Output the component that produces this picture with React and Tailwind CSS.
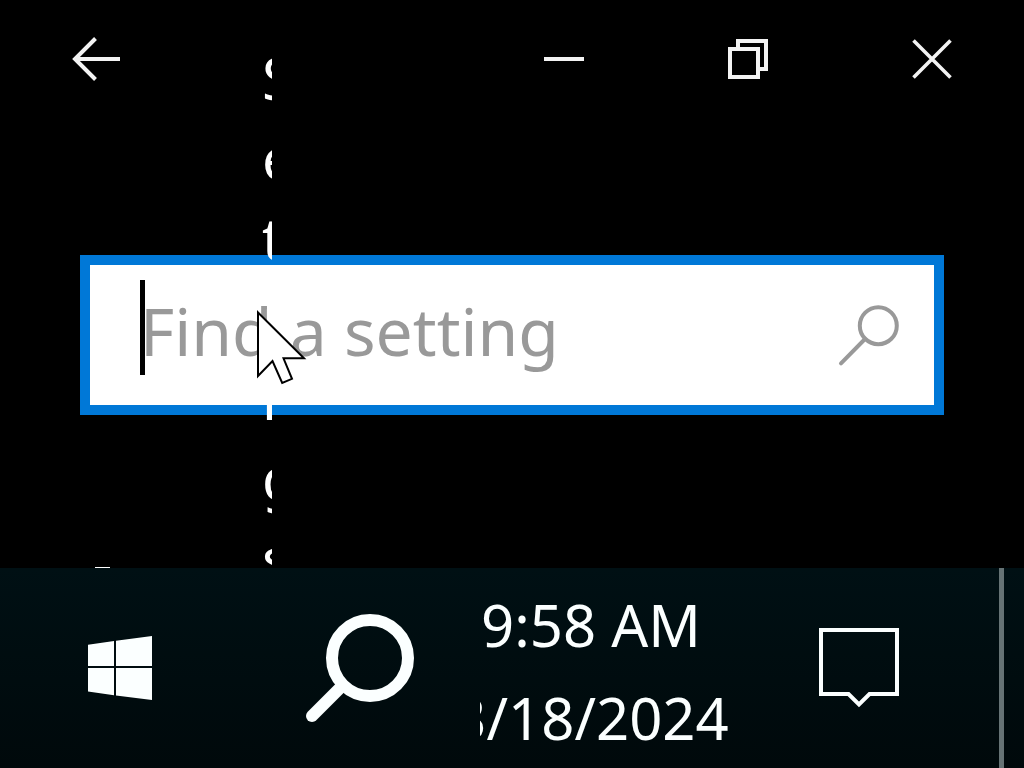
import React, { useState } from "react";

const TITLE_LINES = ["S", "e", "tt", "i", "n", "g", "s"];

function BackIcon() {
  return (
    <svg width="48" height="44" viewBox="0 0 48 44" fill="none" stroke="#f3f3f3" strokeWidth="4">
      <path d="M23.5 1.5 3 22l20.500 20.500M3 22h45" />
    </svg>
  );
}

function MinimizeIcon() {
  return (
    <svg width="40" height="40" viewBox="0 0 40 40" fill="none" stroke="#f3f3f3" strokeWidth="4">
      <path d="M0 20h40" />
    </svg>
  );
}

function RestoreIcon() {
  return (
    <svg width="40" height="40" viewBox="0 0 40 40" fill="none" stroke="#f3f3f3" strokeWidth="4">
      <path d="M2 10h28v28H2zM10 10V2h28v28h-8" />
    </svg>
  );
}

function CloseIcon() {
  return (
    <svg width="40" height="40" viewBox="0 0 40 40" fill="none" stroke="#f3f3f3" strokeWidth="3.6">
      <path d="M1.5 1.5l37 37M38.5 1.5l-37 37" />
    </svg>
  );
}

function FindIcon() {
  return (
    <svg width="64" height="64" viewBox="0 0 64 64" fill="none" stroke="#999999" strokeWidth="4" strokeLinecap="round">
      <circle cx="40.3" cy="22.7" r="18.5" />
      <path d="M27 36 3 60.3" />
    </svg>
  );
}

function WindowsIcon() {
  return (
    <svg width="64" height="64" viewBox="0 0 64 64" fill="#fbffff">
      <path d="M0 8.8 26 5.1V30H0zM28 4.8 64 0v30H28zM0 32h26v27.2L0 55.4zM28 32h36v32l-36-4.6z" />
    </svg>
  );
}

function TaskbarSearchIcon() {
  return (
    <svg width="108" height="108" viewBox="0 0 108 108" fill="none" stroke="#fbffff" strokeWidth="12" strokeLinecap="round">
      <circle cx="64" cy="44" r="38" />
      <path d="M36 72 6 102" />
    </svg>
  );
}

function NotificationIcon() {
  return (
    <svg width="80" height="80" viewBox="0 0 80 80" fill="none" stroke="#fbffff" strokeWidth="4">
      <path d="M2 2h76v64H50.5L40 76.5 29.5 66H2z" />
    </svg>
  );
}

function Pointer() {
  return (
    <svg
      className="absolute left-[256px] top-[308px] pointer-events-none"
      width="52"
      height="78"
      viewBox="0 0 52 78"
      fill="#ffffff"
      stroke="#000000"
      strokeWidth="2"
    >
      <path d="M2 4.5 48 50.3H27.5l8.5 20.5-9.8 4.2L16.5 53 2 68z" />
    </svg>
  );
}

function TitleBar() {
  const controls = [
    { label: "Minimize", Icon: MinimizeIcon },
    { label: "Restore", Icon: RestoreIcon },
    { label: "Close", Icon: CloseIcon },
  ];

  return (
    <header className="flex h-[118px] justify-between">
      <button type="button" aria-label="Back" className="flex w-48 items-center justify-center">
        <BackIcon />
      </button>
      <div className="flex">
        {controls.map(({ label, Icon }) => (
          <button key={label} type="button" aria-label={label} className="flex w-46 items-center justify-center">
            <Icon />
          </button>
        ))}
      </div>
    </header>
  );
}

function SearchBox() {
  const [query, setQuery] = useState("");

  return (
    <form
      className="relative mx-20 mt-[137px] flex h-40 items-center border-10 border-[#0078d7] bg-white pr-8 pl-[50px]"
      onSubmit={(e) => e.preventDefault()}
    >
      <input
        type="text"
        aria-label="Find a setting"
        placeholder="Find a setting"
        value={query}
        onChange={(e) => setQuery(e.target.value)}
        className="h-full min-w-0 flex-1 bg-transparent pb-[10px] text-[66px] text-black caret-transparent outline-none placeholder:text-[#999999]"
      />
      <span className="absolute top-[15px] left-[50px] h-[95px] w-[5px] bg-black" />
      <button type="submit" aria-label="Search">
        <FindIcon />
      </button>
    </form>
  );
}

function Taskbar() {
  return (
    <footer className="flex h-[200px] shrink-0 bg-linear-to-b from-[#001014] to-[#00090b] text-[#fbffff]">
      <button type="button" aria-label="Start" className="flex w-60 items-center justify-center">
        <WindowsIcon />
      </button>
      <button type="button" aria-label="Search" className="flex w-60 items-center justify-center">
        <TaskbarSearchIcon />
      </button>
      <button type="button" className="flex w-[259px] items-center overflow-hidden pt-[5px]">
        <span className="flex w-[222px] flex-col items-center text-[58px] leading-[93px] whitespace-nowrap">
          <span>9:58 AM</span>
          <span>3/18/2024</span>
        </span>
      </button>
      <button type="button" aria-label="Notifications" className="flex w-60 items-center justify-center">
        <NotificationIcon />
      </button>
      <button type="button" aria-label="Show desktop" className="ml-auto w-[25px] border-l-5 border-[#667375]" />
    </footer>
  );
}

export default function App() {
  return (
    <div className="flex min-h-screen flex-col bg-black font-['Noto_Sans','Open_Sans',sans-serif]">
      <main className="relative flex flex-1 flex-col overflow-hidden">
        <TitleBar />
        <SearchBox />
        {/* top edge of the first nav item, the rest is under the taskbar */}
        <span className="mt-auto ml-[95px] h-px w-[15px] bg-white" />
        <h1 className="pointer-events-none absolute top-[38px] left-[262px] w-[10px] overflow-hidden text-[58px] leading-[80px] text-white">
          {TITLE_LINES.map((line, i) => (
            <span key={i} className="block">
              {line}
            </span>
          ))}
        </h1>
        <Pointer />
      </main>
      <Taskbar />
    </div>
  );
}
